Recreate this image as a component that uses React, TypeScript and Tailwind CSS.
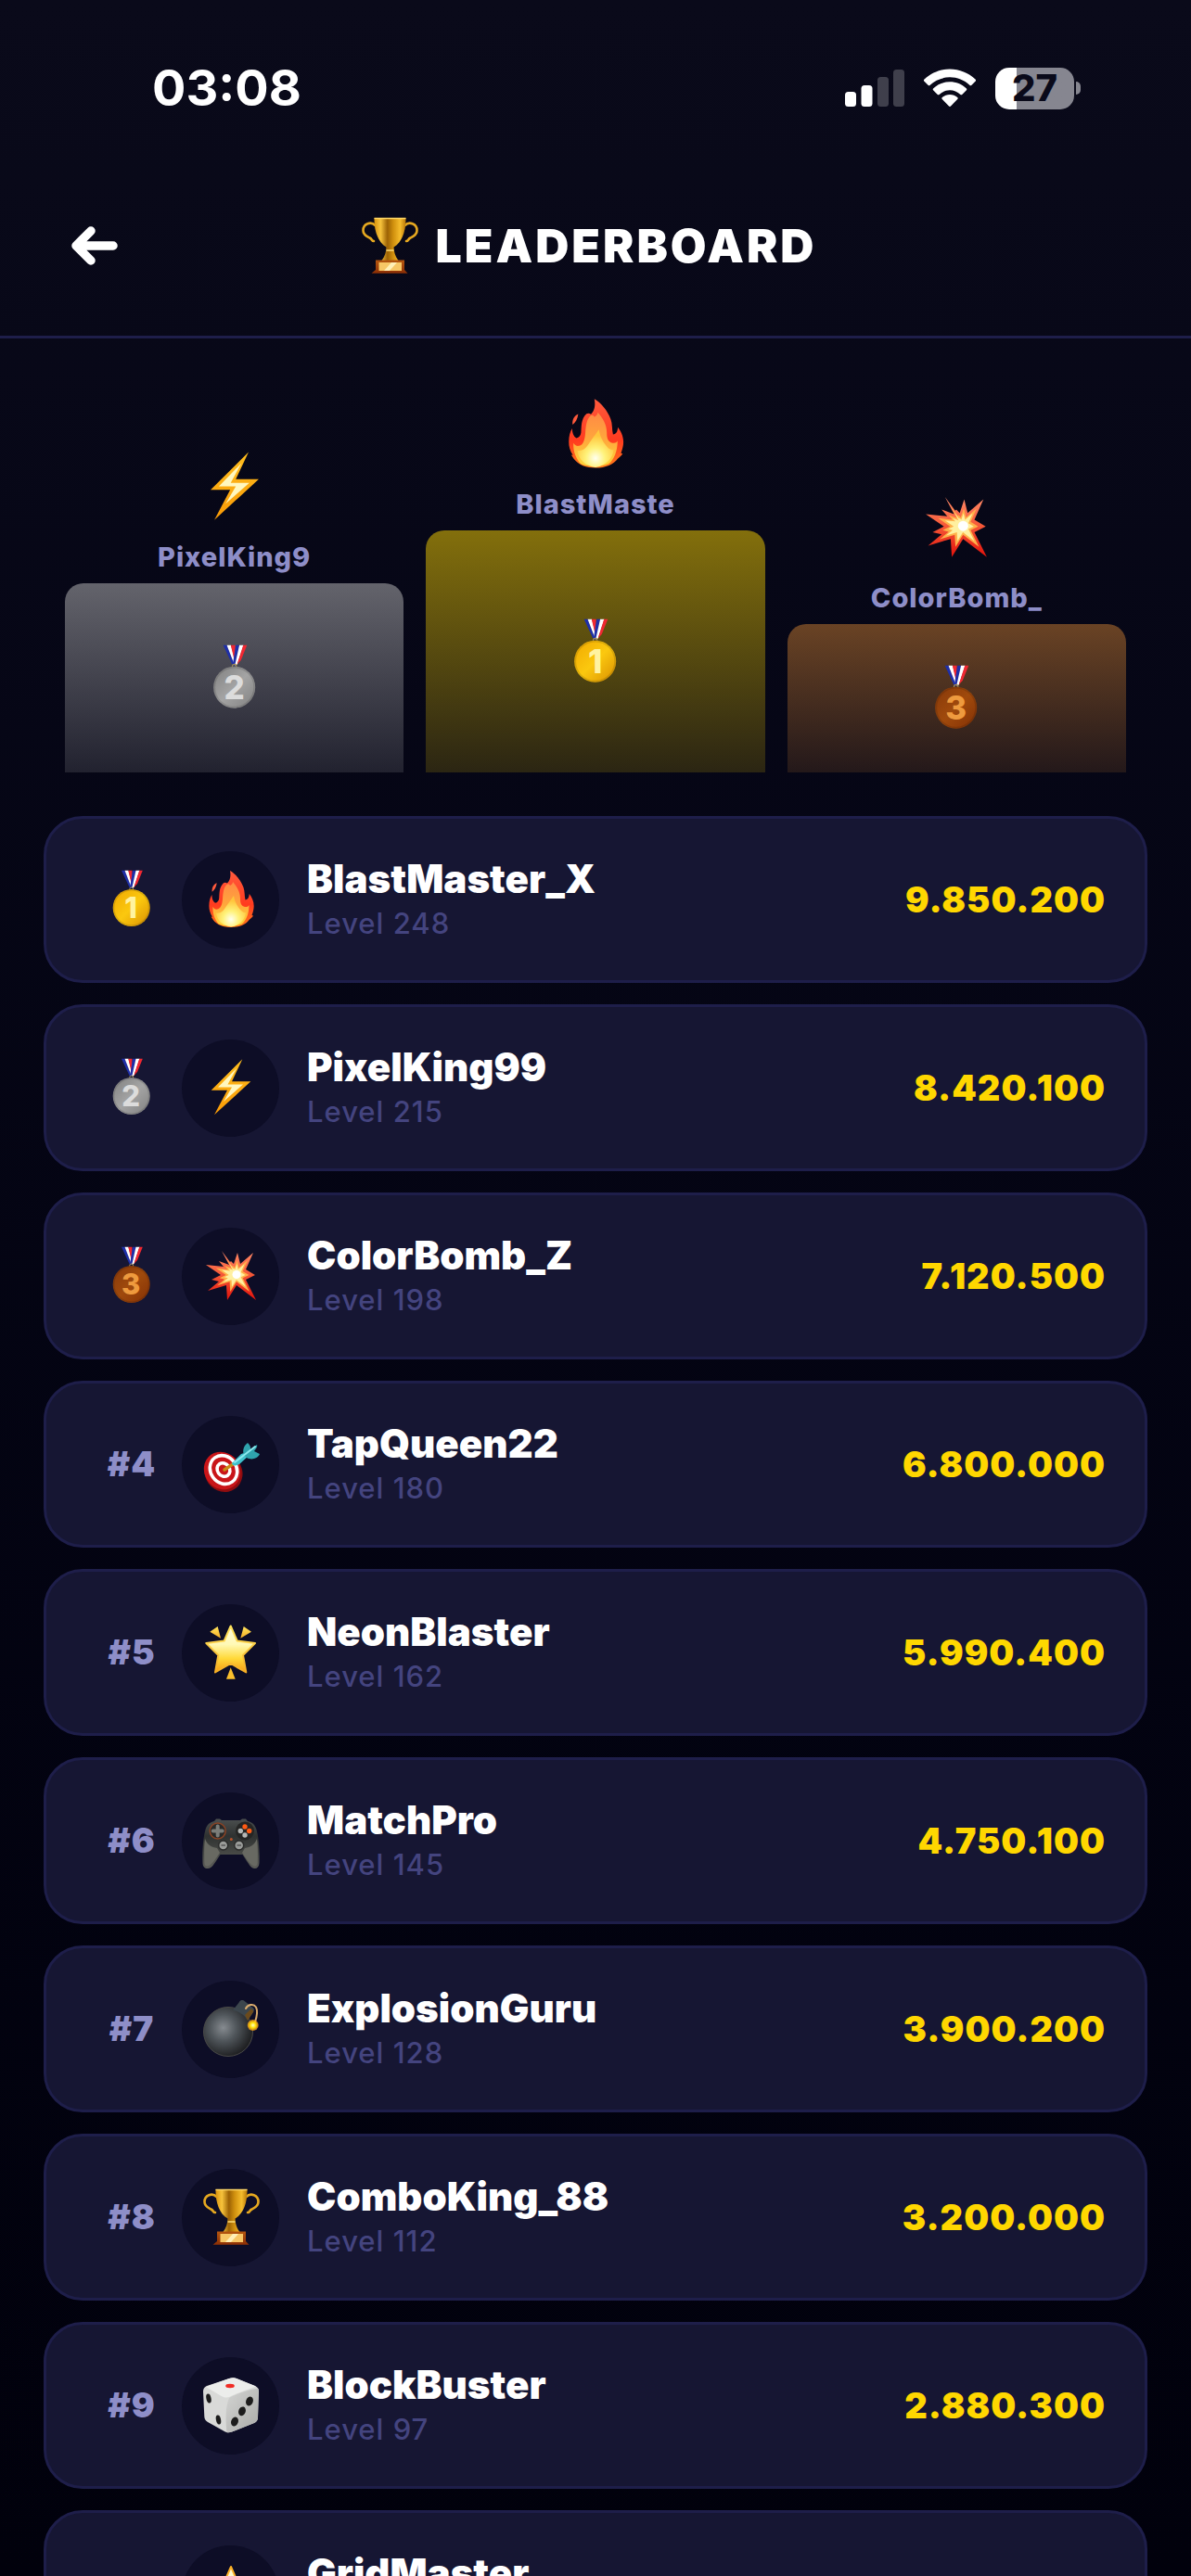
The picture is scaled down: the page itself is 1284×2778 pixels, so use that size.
import { useState } from 'react';

type EmojiName = 'fire' | 'bolt' | 'boom' | 'dart' | 'glow' | 'gamepad' | 'bomb' | 'trophy' | 'dice' | 'star';

const players: { name: string; level: number; score: number; emoji: EmojiName }[] = [
  { name: 'BlastMaster_X', level: 248, score: 9850200, emoji: 'fire' },
  { name: 'PixelKing99', level: 215, score: 8420100, emoji: 'bolt' },
  { name: 'ColorBomb_Z', level: 198, score: 7120500, emoji: 'boom' },
  { name: 'TapQueen22', level: 180, score: 6800000, emoji: 'dart' },
  { name: 'NeonBlaster', level: 162, score: 5990400, emoji: 'glow' },
  { name: 'MatchPro', level: 145, score: 4750100, emoji: 'gamepad' },
  { name: 'ExplosionGuru', level: 128, score: 3900200, emoji: 'bomb' },
  { name: 'ComboKing_88', level: 112, score: 3200000, emoji: 'trophy' },
  { name: 'BlockBuster', level: 97, score: 2880300, emoji: 'dice' },
  { name: 'GridMaster', level: 85, score: 2410700, emoji: 'star' },
];

// second place on the left, winner in the middle
const podium = [
  { place: 2, bar: 'h-[204px] from-[#c0c0c0]/50 to-[#c0c0c0]/15' },
  { place: 1, bar: 'h-[261px] from-[#ffd700]/50 to-[#ffd700]/15' },
  { place: 3, bar: 'h-[160px] from-[#cd7f32]/50 to-[#cd7f32]/15' },
];

const formatScore = (n: number) => String(n).replace(/\B(?=(\d{3})+$)/g, '.');

const BURST = '22,5 31,17 32,16 35,19 39,7 42,19 56,7 48,25 58,31 48,36 59,58 38,42 28,58 27,42 7,48 19,38 11,36 21,31 5,20 24,22 19,16 30,20';

function Gradients() {
  return (
    <svg width="0" height="0" className="absolute" aria-hidden="true">
      <defs>
        <linearGradient id="fireOuter" x1="0" y1="0" x2="0" y2="1">
          <stop offset="0" stopColor="#ff5a3c" />
          <stop offset="0.6" stopColor="#ff3b1f" />
          <stop offset="1" stopColor="#ff7a1a" />
        </linearGradient>
        <linearGradient id="fireMid" x1="0" y1="0" x2="0" y2="1">
          <stop offset="0" stopColor="#ff8a45" />
          <stop offset="0.5" stopColor="#ffa63c" />
          <stop offset="1" stopColor="#ffd83a" />
        </linearGradient>
        <radialGradient id="fireCore" cx="0.5" cy="0.76" r="0.6">
          <stop offset="0" stopColor="#fffff0" />
          <stop offset="0.45" stopColor="#fff27a" />
          <stop offset="1" stopColor="#ffc53c" />
        </radialGradient>
        <linearGradient id="boltFill" x1="0" y1="0" x2="0" y2="1">
          <stop offset="0" stopColor="#ffbe1e" />
          <stop offset="1" stopColor="#f99a06" />
        </linearGradient>
        <linearGradient id="boomOuter" x1="0" y1="0" x2="0" y2="1">
          <stop offset="0" stopColor="#ff8a68" />
          <stop offset="0.45" stopColor="#f65b3a" />
          <stop offset="1" stopColor="#e3120b" />
        </linearGradient>
        <linearGradient id="starFill" x1="0" y1="0" x2="0" y2="1">
          <stop offset="0" stopColor="#fffbe0" />
          <stop offset="0.4" stopColor="#fff9b4" />
          <stop offset="0.7" stopColor="#ffd93a" />
          <stop offset="1" stopColor="#f79a12" />
        </linearGradient>
        <linearGradient id="rayFill" x1="0" y1="0" x2="0" y2="1">
          <stop offset="0" stopColor="#ffe45e" />
          <stop offset="1" stopColor="#f6ae24" />
        </linearGradient>
        <linearGradient id="padFill" x1="0" y1="0" x2="0" y2="1">
          <stop offset="0" stopColor="#4b4f4f" />
          <stop offset="0.35" stopColor="#2f3231" />
          <stop offset="1" stopColor="#5c5d58" />
        </linearGradient>
        <radialGradient id="bombFill" cx="0.4" cy="0.42" r="0.6">
          <stop offset="0" stopColor="#868b90" />
          <stop offset="0.45" stopColor="#50565b" />
          <stop offset="1" stopColor="#1f2022" />
        </radialGradient>
        <radialGradient id="spark">
          <stop offset="0" stopColor="#ffffc8" />
          <stop offset="0.5" stopColor="#ffe100" />
          <stop offset="1" stopColor="#ff9a1e" stopOpacity="0.7" />
        </radialGradient>
        <linearGradient id="cupFill">
          <stop offset="0" stopColor="#d9930e" />
          <stop offset="0.2" stopColor="#f7c33c" />
          <stop offset="0.42" stopColor="#9c6204" />
          <stop offset="0.6" stopColor="#d0900e" />
          <stop offset="0.82" stopColor="#f5bc2c" />
          <stop offset="1" stopColor="#b97808" />
        </linearGradient>
        <linearGradient id="baseFill" x1="0" y1="0" x2="0" y2="1">
          <stop offset="0" stopColor="#b4560f" />
          <stop offset="1" stopColor="#8c2f05" />
        </linearGradient>
        <linearGradient id="dieRight" x1="0" y1="0" x2="1" y2="1">
          <stop offset="0" stopColor="#d4d5d3" />
          <stop offset="1" stopColor="#a9aaa8" />
        </linearGradient>
        <linearGradient id="medal1" x1="0" y1="0" x2="1" y2="1">
          <stop offset="0" stopColor="#f0a800" />
          <stop offset="0.5" stopColor="#fbc80f" />
          <stop offset="1" stopColor="#d98f00" />
        </linearGradient>
        <linearGradient id="medal2" x1="0" y1="0" x2="1" y2="1">
          <stop offset="0" stopColor="#7f7f7f" />
          <stop offset="0.5" stopColor="#a4a4a4" />
          <stop offset="1" stopColor="#808080" />
        </linearGradient>
        <linearGradient id="medal3" x1="0" y1="0" x2="1" y2="1">
          <stop offset="0" stopColor="#86380a" />
          <stop offset="0.5" stopColor="#a04a0c" />
          <stop offset="1" stopColor="#833005" />
        </linearGradient>
      </defs>
    </svg>
  );
}

const art: Record<EmojiName, React.ReactNode> = {
  fire: (
    <>
      <path d="M16.700 14.300c-3 1.200-5.500 4.500-5 9.500 2.500-2 4.500-5 5-9.500z" fill="#ff5a3c" />
      <path d="M31 1c6 3.500 11.500 10 14.500 18 1.500 4 1 9 2 13.500 3-.5 4-2.700 4.300-6.500 2.700 3.500 4.900 8 4.900 13 0 3.500-1 7-2.200 10l1.500.5c-1 1.700-2.500 3-4.200 4.200C48 59 41 62 32.300 62S17 59.500 12.800 54l-2.300-3.500 1.500.2C9.500 47 8.300 43 8.400 38.500c.1-4.500 1-8.500 3-11.500 0 4 1 7 3.600 8.700 2.500-.5 3.900-2.200 4.200-5 .5-5-.3-11.500 4.800-16.500 1.300-.8 2.500-.7 4 .3C31.500 11 32 6 31 1z" fill="url(#fireOuter)" />
      <path d="M34 13c5 5.500 8 11.500 8 18 0 5 1 8 5 9 3 .5 4-1 4.500-2 0 9-3 17-8 20.500-7 3-18 3-24.500 0C15 54 12 48 12.500 40c1 2 3 3 5 2.500 4-1 5-6 5.500-11 .5-7 1-13 5-16 2-.3 2.500.5 3 1.500 1.500-1 3-2 3-4z" fill="url(#fireMid)" />
      <path d="M35 28c1 6 3 10 7 15 2 2.500 4.500 3.500 6 3-.5 7-6 14-16 15.500C23 60 17 55 16 46.500c5 1 8-2.500 10.500-6.500 2.500-4 5-7 8.500-12z" fill="url(#fireCore)" />
    </>
  ),
  bolt: (
    <>
      <path d="M44.300 1.300L10.700 34.700H28L14 61.300 53.300 25.300H33z" fill="url(#boltFill)" />
      <path d="M38 11L18 31.500H33L24 47 45 28.500H28.500z" fill="#fff7c0" />
    </>
  ),
  boom: (
    <>
      <polygon points={BURST} fill="url(#boomOuter)" />
      <polygon points={BURST} fill="#ffb14a" transform="translate(12.500 10.200) scale(.67)" />
      <polygon points={BURST} fill="#fff0a0" transform="translate(19.600 16) scale(.48)" />
      <circle cx="38" cy="30.500" r="4.500" fill="#fff" />
    </>
  ),
  dart: (
    <>
      <ellipse cx="24" cy="41" rx="20" ry="21.500" fill="#8e0d10" transform="rotate(-35 24 41)" />
      <ellipse cx="22.500" cy="39" rx="19" ry="21" fill="#c91519" transform="rotate(-35 22.500 39)" />
      <g transform="rotate(-35 24 38)" fill="none" strokeWidth="3.600">
        <ellipse cx="24" cy="38" rx="14" ry="16" stroke="#fff" />
        <ellipse cx="24" cy="38" rx="6.600" ry="7.600" stroke="#fff" />
      </g>
      <path d="M25 38l9-6" stroke="#c98a16" strokeWidth="3.500" strokeLinecap="round" />
      <path d="M33 31l10-10 6-2 2 4-10 9c-3 2-8 2-8-1z" fill="#3fc1cc" />
      <path d="M46 22c-2-5 0-10 4-13 2.500 2 3.500 5 3 7.500L60 11c1 2-1 4-3 7l6 3c-2 5-9 7-14 4z" fill="#2fa3ad" />
      <path d="M36 30l13-10M49 20l9-7" stroke="#8ce8ee" strokeWidth="2" strokeLinecap="round" />
    </>
  ),
  glow: (
    <>
      <path d="M31.700 3.500L38.700 19.500 58 22 45 35 48.300 53.500 31.700 44 15 53.500 18.300 35 5.300 22 24.700 19.500z" fill="url(#starFill)" stroke="url(#rayFill)" strokeWidth="2" strokeLinejoin="round" />
      <path d="M9.300 9.700L17.700 4 21 16.700zM54 9.700L45.700 4 42.300 16.700z" fill="url(#rayFill)" />
      <path d="M31.700 48.300L36.700 60.700H27z" fill="#fbc02d" />
    </>
  ),
  gamepad: (
    <>
      <path d="M14 11l2-2.500h4l2 1.500h20l2-1.500h4l2 2.500c5 1 8 4 9.500 9C62 29 63 42 62.500 56c-.3 4-2 6-5 6-3.500 0-6-4-13-15H20.500c-7 11-9.500 15-13.500 15-3.500 0-5.300-2-5.500-6C1 42 2 29 4.500 20c1.500-5 4.500-8 9.500-9z" fill="url(#padFill)" />
      <path d="M4 30c3 7 7 9 13 10l3 5C14 54 10 59 7 59.500c-3 0-3.700-2-3.700-5C3 45 3 37 4 30zM60 30c-3 7-7 9-13 10l-3 5c6 9 10 14 13 14.500 3 0 3.700-2 3.700-5C61 45 61 37 60 30z" fill="#686962" />
      <circle cx="17.700" cy="21.500" r="8.500" fill="#292a29" stroke="#8a4325" strokeWidth="1.500" />
      <path d="M17.700 16.500v10M12.700 21.500h10" stroke="#7b7d79" strokeWidth="4" strokeLinecap="round" />
      <circle cx="47" cy="21.500" r="10" fill="#252625" />
      <circle cx="47" cy="17" r="2.700" fill="#ff5a14" />
      <circle cx="51.700" cy="21.500" r="2.700" fill="#ff5a14" />
      <circle cx="42.300" cy="21.500" r="2.700" fill="#b5b7b5" />
      <circle cx="47" cy="26" r="2.700" fill="#b5b7b5" />
      <circle cx="23.700" cy="37" r="5" fill="#9a9c99" stroke="#2a2b2a" strokeWidth="1.500" />
      <circle cx="40.700" cy="37" r="5" fill="#9a9c99" stroke="#2a2b2a" strokeWidth="1.500" />
      <path d="M21.500 37h4.500M38.500 37h4.500" stroke="#555" strokeWidth="1.500" />
      <circle cx="32.300" cy="30.500" r="1.500" fill="#b9522a" />
    </>
  ),
  bomb: (
    <>
      <circle cx="29" cy="35" r="26.500" fill="url(#bombFill)" stroke="#4a4a48" />
      <path d="M34 12l7-9c1-2 3-2.500 5-1.500l10 8c1.500 1.200 1 3-.3 5L50 23c-3-6-9-10-16-11z" fill="#3c464d" />
      <path d="M47 17l7-7 2.500 3L50 23z" fill="#6b4a1c" />
      <path d="M48 10c2-4 8-6 11-1.500 2 4 1 10-1 16" fill="none" stroke="#d9ab6e" strokeWidth="2" strokeLinecap="round" />
      <circle cx="55.700" cy="28" r="6" fill="url(#spark)" />
    </>
  ),
  trophy: (
    <>
      <g fill="none" stroke="#e5a820" strokeWidth="2.600" strokeLinecap="round">
        <path d="M16.500 10C12 5.500 3.500 8 3.500 15.500c0 5 4 6.500 7 8 3 1.500 2 3.500 4.500 3.500" />
        <path d="M48.500 10c4.500-4.500 13-2 13 5.500 0 5-4 6.500-7 8-3 1.500-2 3.500-4.500 3.500" />
      </g>
      <path d="M15.500 2h34c.3 13-3.500 26-13 31.500.2 5 1.500 10 5 14.500h-18c3.500-4.500 4.800-9.500 5-14.500C19 28 15.200 15 15.500 2z" fill="url(#cupFill)" />
      <path d="M15.500 2.500h34" stroke="#ffd766" strokeWidth="1.500" />
      <path d="M28.500 37h8" stroke="#ffdf7a" strokeWidth="1.500" />
      <path d="M17 47.500h31v10.500l3.500 3.700h-39L17 58z" fill="url(#baseFill)" />
      <rect x="20.500" y="50" width="24.500" height="9" fill="#f7c766" />
      <path d="M26 59l8-9h6l-8 9z" fill="#fff0b8" />
    </>
  ),
  dice: (
    <>
      <path d="M6 11L30 3c3-1 6-1 8 0l20 8c3 1.500 4 3 4 6l-1 28c0 3-1.500 5-4 6L33 60.500c-3 1.200-6 1.200-9-1L7 50c-2.500-1.500-3.500-3-3.700-6L2 17c0-3 1.500-5 4-6z" fill="#d9dad8" />
      <path d="M30 24c5-3 22-10 31.700-10L61 45c0 3-1.500 5-4 6L33 60.500c-2 .8-4.500.8-5.500.5-1.500-12-1.500-28 2.500-37z" fill="url(#dieRight)" />
      <path d="M5 12L30 3c3-1 6-1 8 0l21 8.500C50 15 38 19 30 23c-3 .8-5 .5-8-.8z" fill="#ecedeb" />
      <ellipse cx="31" cy="11" rx="4.800" ry="2.200" fill="#f02c24" />
      <g fill="#1c1c1c">
        <ellipse cx="8" cy="24.500" rx="2.600" ry="5" transform="rotate(-12 8 24.500)" />
        <ellipse cx="18.500" cy="47.500" rx="2.600" ry="5" transform="rotate(-12 18.500 47.500)" />
        <ellipse cx="52" cy="27.500" rx="3.800" ry="5" transform="rotate(20 52 27.500)" />
        <ellipse cx="44" cy="38.300" rx="3.800" ry="5" transform="rotate(20 44 38.300)" />
        <ellipse cx="36" cy="49.500" rx="3.800" ry="5" transform="rotate(20 36 49.500)" />
      </g>
    </>
  ),
  star: (
    <path d="M32 3L40.500 22.500 61 24.500 45.500 38.500 50 59 32 48.500 14 59 18.500 38.500 3 24.500 23.500 22.500z" fill="url(#starFill)" stroke="#fbb027" strokeWidth="2" strokeLinejoin="round" />
  ),
};

function Emoji({ name, className }: { name: EmojiName; className: string }) {
  return (
    <svg viewBox="0 0 64 64" className={className} aria-hidden="true">
      {art[name]}
    </svg>
  );
}

function Medal({ place, className }: { place: number; className: string }) {
  const numeral = ['#fff3a0', '#dcdcdc', '#ee9a3e'][place - 1];
  return (
    <svg viewBox="0 0 64 64" className={className} role="img" aria-label={`Place ${place}`}>
      <path d="M21 .7h3.700L32 20h-2z" fill="#1f2fa8" />
      <path d="M24.500 .7h4L33 18l-1 2z" fill="#fff" />
      <path d="M28.300 .7h4.200l.5 14-1 2z" fill="#f02832" />
      <path d="M33 .7h3.700L32.500 20H30z" fill="#1f2fa8" />
      <path d="M36.500 .7h4L34.500 19l-2.300 1z" fill="#fff" />
      <path d="M40.200 .7h3.600L38 15l-3.700 4z" fill="#f02832" />
      <circle cx="31.700" cy="21" r="2" fill="none" stroke="#a08a50" />
      <circle cx="31.700" cy="41" r="20" fill={`url(#medal${place})`} />
      <circle cx="31.700" cy="41" r="19" fill="none" stroke="#000" strokeOpacity=".12" strokeWidth="1.500" />
      <text x="31.700" y="52" textAnchor="middle" fill={numeral} className="font-['Inter',sans-serif] text-[31px] font-extrabold">
        {place}
      </text>
    </svg>
  );
}

function StatusBar() {
  return (
    <div className="flex items-center justify-between pt-[67px] pr-[119px] pl-[164px]">
      <span className="text-[54px] leading-[56px] font-bold">03:08</span>
      <div className="flex items-center gap-5">
        <svg viewBox="0 0 64 42" className="h-[42px] w-16" fill="#fff" role="img" aria-label="Signal">
          <rect x="0" y="25" width="12" height="16" rx="3.500" />
          <rect x="17.500" y="18" width="12" height="23" rx="3.500" />
          <rect x="35" y="9" width="12" height="32" rx="3.500" opacity=".22" />
          <rect x="52" y="1" width="12" height="40" rx="3.500" opacity=".22" />
        </svg>
        <svg viewBox="0 0 58 42" className="h-[42px] w-[58px]" fill="#fff" role="img" aria-label="Wi-Fi">
          <path d="M29 .5c10.500 0 20 4 27.500 11 .8.800.8 1.500 0 2.300l-4 4c-.7.700-1.400.700-2.200 0C44.500 12.300 37 9.300 29 9.300s-15.500 3-21.300 8.500c-.8.700-1.500.700-2.200 0l-4-4c-.8-.8-.8-1.500 0-2.300C9 4.500 18.500.5 29 .5z" />
          <path d="M29 14.300c6.800 0 13 2.500 17.700 7 .8.800.8 1.500 0 2.300l-4.200 4.200c-.7.700-1.300.700-2.100.1C37.200 25 33.200 23.300 29 23.300s-8.200 1.700-11.400 4.600c-.8.600-1.400.6-2.100-.1l-4.200-4.200c-.8-.8-.8-1.500 0-2.300 4.700-4.500 10.900-7 17.700-7z" />
          <path d="M29 28c3.200 0 6 1.100 8.200 3 .7.700.7 1.400 0 2.100l-7 7.200c-.8.800-1.600.8-2.400 0l-7-7.200c-.7-.7-.7-1.400 0-2.100 2.200-1.900 5-3 8.200-3z" />
        </svg>
        <div className="flex items-center gap-0.5">
          <div className="flex h-[45px] w-[85px] items-center justify-center rounded-[15px] bg-linear-to-r from-white from-27% to-[#868690] to-27% text-[40px] leading-none font-extrabold text-[#0a0a1a]">
            27
          </div>
          <div className="h-[14px] w-[5px] rounded-r-full bg-[#868690]" />
        </div>
      </div>
    </div>
  );
}

export default function App() {
  const [selected, setSelected] = useState<string | null>(null);

  return (
    <div className="flex h-screen w-full flex-col overflow-hidden bg-linear-to-b from-[#0a0a1a] to-[#01010c] font-['Inter',sans-serif] text-white">
      <Gradients />
      <StatusBar />

      <header className="mt-[102px] flex items-center justify-between border-b-[3px] border-[#1e1e4a] px-[70px] pb-[57px]">
        <button type="button" aria-label="Back" onClick={() => setSelected(null)} className="flex h-20 w-16 items-center justify-center">
          <svg viewBox="0 0 52 44" className="h-[44px] w-[52px]" fill="none" stroke="#fff" strokeWidth="9.500" strokeLinecap="round" strokeLinejoin="round" aria-hidden="true">
            <path d="M6 22H46M22 6L6 22l16 16" />
          </svg>
        </button>
        <h1 className="flex items-center gap-[18px] text-[50px] leading-[60px] font-black tracking-[3px]">
          <Emoji name="trophy" className="size-16" />
          LEADERBOARD
        </h1>
        <div className="w-20" />
      </header>

      <section aria-label="Top three" className="flex items-end gap-6 px-[70px] pt-16">
        {podium.map(({ place, bar }) => {
          const player = players[place - 1];
          return (
            <div key={place} className="flex flex-1 flex-col items-center">
              <Emoji name={player.emoji} className="size-[78px]" />
              <p className="mt-[17px] mb-2 text-[29px] leading-10 font-extrabold tracking-[1px] text-[#8e8ec8]">{player.name.slice(0, 10)}</p>
              <div className={`flex w-full items-center justify-center rounded-t-[20px] bg-linear-to-b ${bar}`}>
                <Medal place={place} className="size-[72px]" />
              </div>
            </div>
          );
        })}
      </section>

      <ol className="mt-[47px] flex min-h-0 flex-1 flex-col gap-[23px] overflow-y-auto px-[47px] [scrollbar-width:none]">
        {players.map((p, i) => (
          <li
            key={p.name}
            onClick={() => setSelected(p.name)}
            aria-current={selected === p.name}
            className="flex h-[180px] shrink-0 items-center rounded-[42px] border-[3px] border-[#1e1e4a] bg-[#161633] px-[42px]"
          >
            <div className="mr-1 flex w-[100px] justify-center text-[37px] font-black tracking-[1px] text-[#8e8ec8]">
              {i < 3 ? <Medal place={i + 1} className="size-16" /> : `#${i + 1}`}
            </div>
            <div className="flex size-[105px] shrink-0 items-center justify-center rounded-full bg-[#0d0d26]">
              <Emoji name={p.emoji} className="size-16" />
            </div>
            <div className="ml-[30px] flex-1">
              <p className="text-[42px] leading-[52px] font-black">{p.name}</p>
              <p className="text-[31px] leading-[44px] font-medium tracking-[1px] text-[#44447f]">Level {p.level}</p>
            </div>
            <span className="text-[38px] font-black tracking-[1px] text-[#ffd700]">{formatScore(p.score)}</span>
          </li>
        ))}
      </ol>
    </div>
  );
}
